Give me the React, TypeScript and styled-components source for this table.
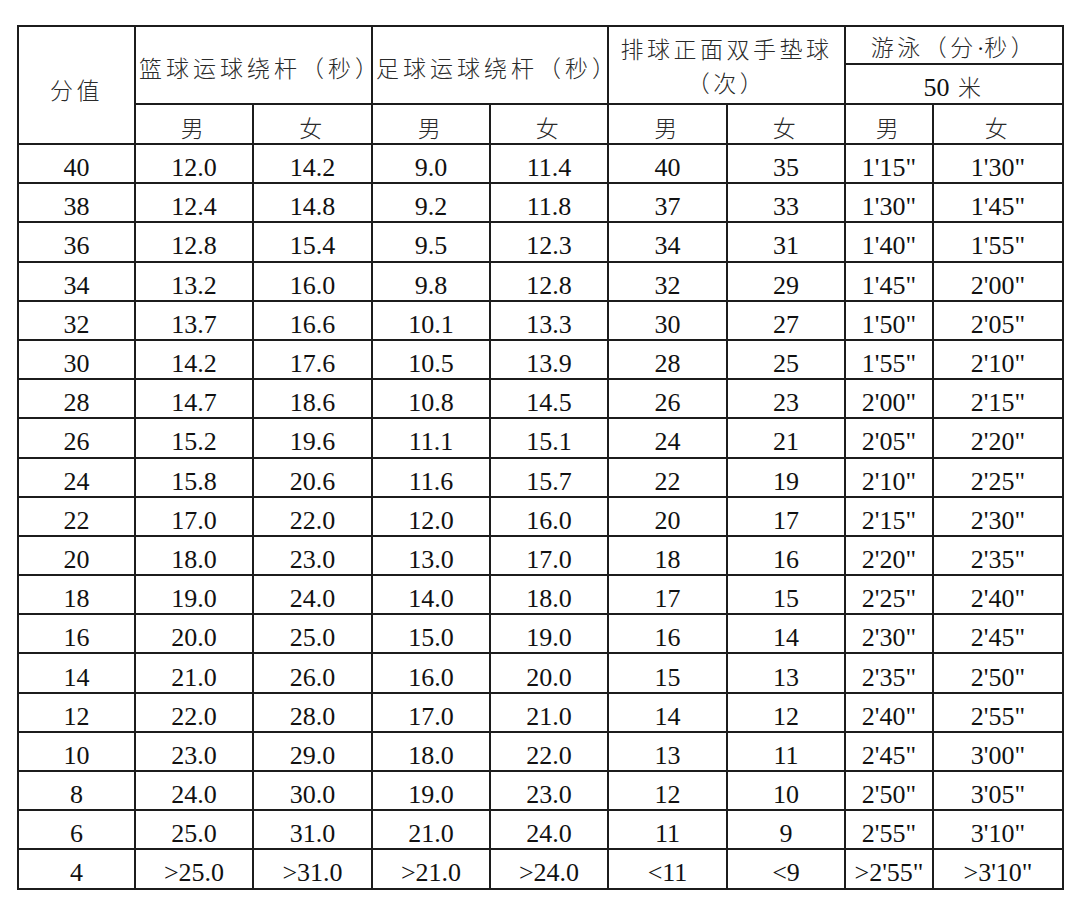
import React from "react";
import styled, { createGlobalStyle } from "styled-components";

const GlobalStyle = createGlobalStyle`
  html, body {
    margin: 0;
    padding: 0;
    background: #ffffff;
  }
`;

const Page = styled.div`
  padding: 25px 0 0 17px;
  width: 1080px;
  height: 909px;
  box-sizing: border-box;
  background: #fff;
`;

const Table = styled.table`
  border-collapse: collapse;
  table-layout: fixed;
  width: 1045px;
  color: #111;
  font-family: "Liberation Serif", "Times New Roman", serif;
`;

const Cell = styled.td<{ $left?: boolean; $shift?: number }>`
  border: 2px solid #1c1c1c;
  padding: ${(p) => p.$shift ?? 0}px 0 0 ${(p) => (p.$left ? 3 : 0)}px;
  text-align: ${(p) => (p.$left ? "left" : "center")};
  vertical-align: middle;
  white-space: nowrap;
  overflow: visible;
`;

const HeadCell = styled(Cell)<{ $tall?: boolean; $wide?: boolean }>`
  font-family: "Noto Sans CJK SC", "Liberation Serif", sans-serif;
  font-weight: 300;
  font-size: 23px;
  color: #2a2a2a;
  letter-spacing: ${(p) => (p.$wide ? 4 : 3.5)}px;
  line-height: ${(p) => (p.$tall ? 34 : 24)}px;
`;

const NumCell = styled(Cell)`
  font-size: 26px;
  line-height: 28px;
`;

const Latin = styled.span<{ $size?: number }>`
  font-family: "Liberation Serif", serif;
  font-size: ${(p) => p.$size ?? 26}px;
  letter-spacing: 0;
  color: #111;
`;

const HeadRow = styled.tr<{ $h: number }>`
  height: ${(p) => p.$h}px;
`;

const BodyRow = styled.tr`
  height: 39.2px;
`;

const widths = [117, 118, 119, 118, 118, 119, 118, 88, 130];

const rows: string[][] = [
  ["40", "12.0", "14.2", "9.0", "11.4", "40", "35", "1'15\"", "1'30\""],
  ["38", "12.4", "14.8", "9.2", "11.8", "37", "33", "1'30\"", "1'45\""],
  ["36", "12.8", "15.4", "9.5", "12.3", "34", "31", "1'40\"", "1'55\""],
  ["34", "13.2", "16.0", "9.8", "12.8", "32", "29", "1'45\"", "2'00\""],
  ["32", "13.7", "16.6", "10.1", "13.3", "30", "27", "1'50\"", "2'05\""],
  ["30", "14.2", "17.6", "10.5", "13.9", "28", "25", "1'55\"", "2'10\""],
  ["28", "14.7", "18.6", "10.8", "14.5", "26", "23", "2'00\"", "2'15\""],
  ["26", "15.2", "19.6", "11.1", "15.1", "24", "21", "2'05\"", "2'20\""],
  ["24", "15.8", "20.6", "11.6", "15.7", "22", "19", "2'10\"", "2'25\""],
  ["22", "17.0", "22.0", "12.0", "16.0", "20", "17", "2'15\"", "2'30\""],
  ["20", "18.0", "23.0", "13.0", "17.0", "18", "16", "2'20\"", "2'35\""],
  ["18", "19.0", "24.0", "14.0", "18.0", "17", "15", "2'25\"", "2'40\""],
  ["16", "20.0", "25.0", "15.0", "19.0", "16", "14", "2'30\"", "2'45\""],
  ["14", "21.0", "26.0", "16.0", "20.0", "15", "13", "2'35\"", "2'50\""],
  ["12", "22.0", "28.0", "17.0", "21.0", "14", "12", "2'40\"", "2'55\""],
  ["10", "23.0", "29.0", "18.0", "22.0", "13", "11", "2'45\"", "3'00\""],
  ["8", "24.0", "30.0", "19.0", "23.0", "12", "10", "2'50\"", "3'05\""],
  ["6", "25.0", "31.0", "21.0", "24.0", "11", "9", "2'55\"", "3'10\""],
  ["4", ">25.0", ">31.0", ">21.0", ">24.0", "<11", "<9", ">2'55\"", ">3'10\""],
];

const genders = ["男", "女", "男", "女", "男", "女", "男", "女"];

const App = () => {
  return (
    <Page>
      <GlobalStyle />
      <Table>
        <colgroup>
          {widths.map((w, i) => (
            <col key={i} style={{ width: w }} />
          ))}
        </colgroup>
        <thead>
          <HeadRow $h={38}>
            <HeadCell rowSpan={3} $shift={8}>
              分值
            </HeadCell>
            <HeadCell rowSpan={2} colSpan={2} $left $wide $shift={4}>
              篮球运球绕杆（秒）
            </HeadCell>
            <HeadCell rowSpan={2} colSpan={2} $left $wide $shift={4}>
              足球运球绕杆（秒）
            </HeadCell>
            <HeadCell rowSpan={2} colSpan={2} $tall $shift={0}>
              排球正面双手垫球
              <br />
              （次）
            </HeadCell>
            <HeadCell colSpan={2} $shift={4}>
              游泳（分<Latin $size={23}>·</Latin>秒）
            </HeadCell>
          </HeadRow>
          <HeadRow $h={40}>
            <HeadCell colSpan={2} $shift={6}>
              <Latin>50</Latin> 米
            </HeadCell>
          </HeadRow>
          <HeadRow $h={40}>
            {genders.map((g, i) => (
              <HeadCell key={i} $shift={6}>
                {g}
              </HeadCell>
            ))}
          </HeadRow>
        </thead>
        <tbody>
          {rows.map((r) => (
            <BodyRow key={r[0]}>
              {r.map((v, i) => (
                <NumCell key={i} $shift={9}>
                  {v}
                </NumCell>
              ))}
            </BodyRow>
          ))}
        </tbody>
      </Table>
    </Page>
  );
};

export default App;
